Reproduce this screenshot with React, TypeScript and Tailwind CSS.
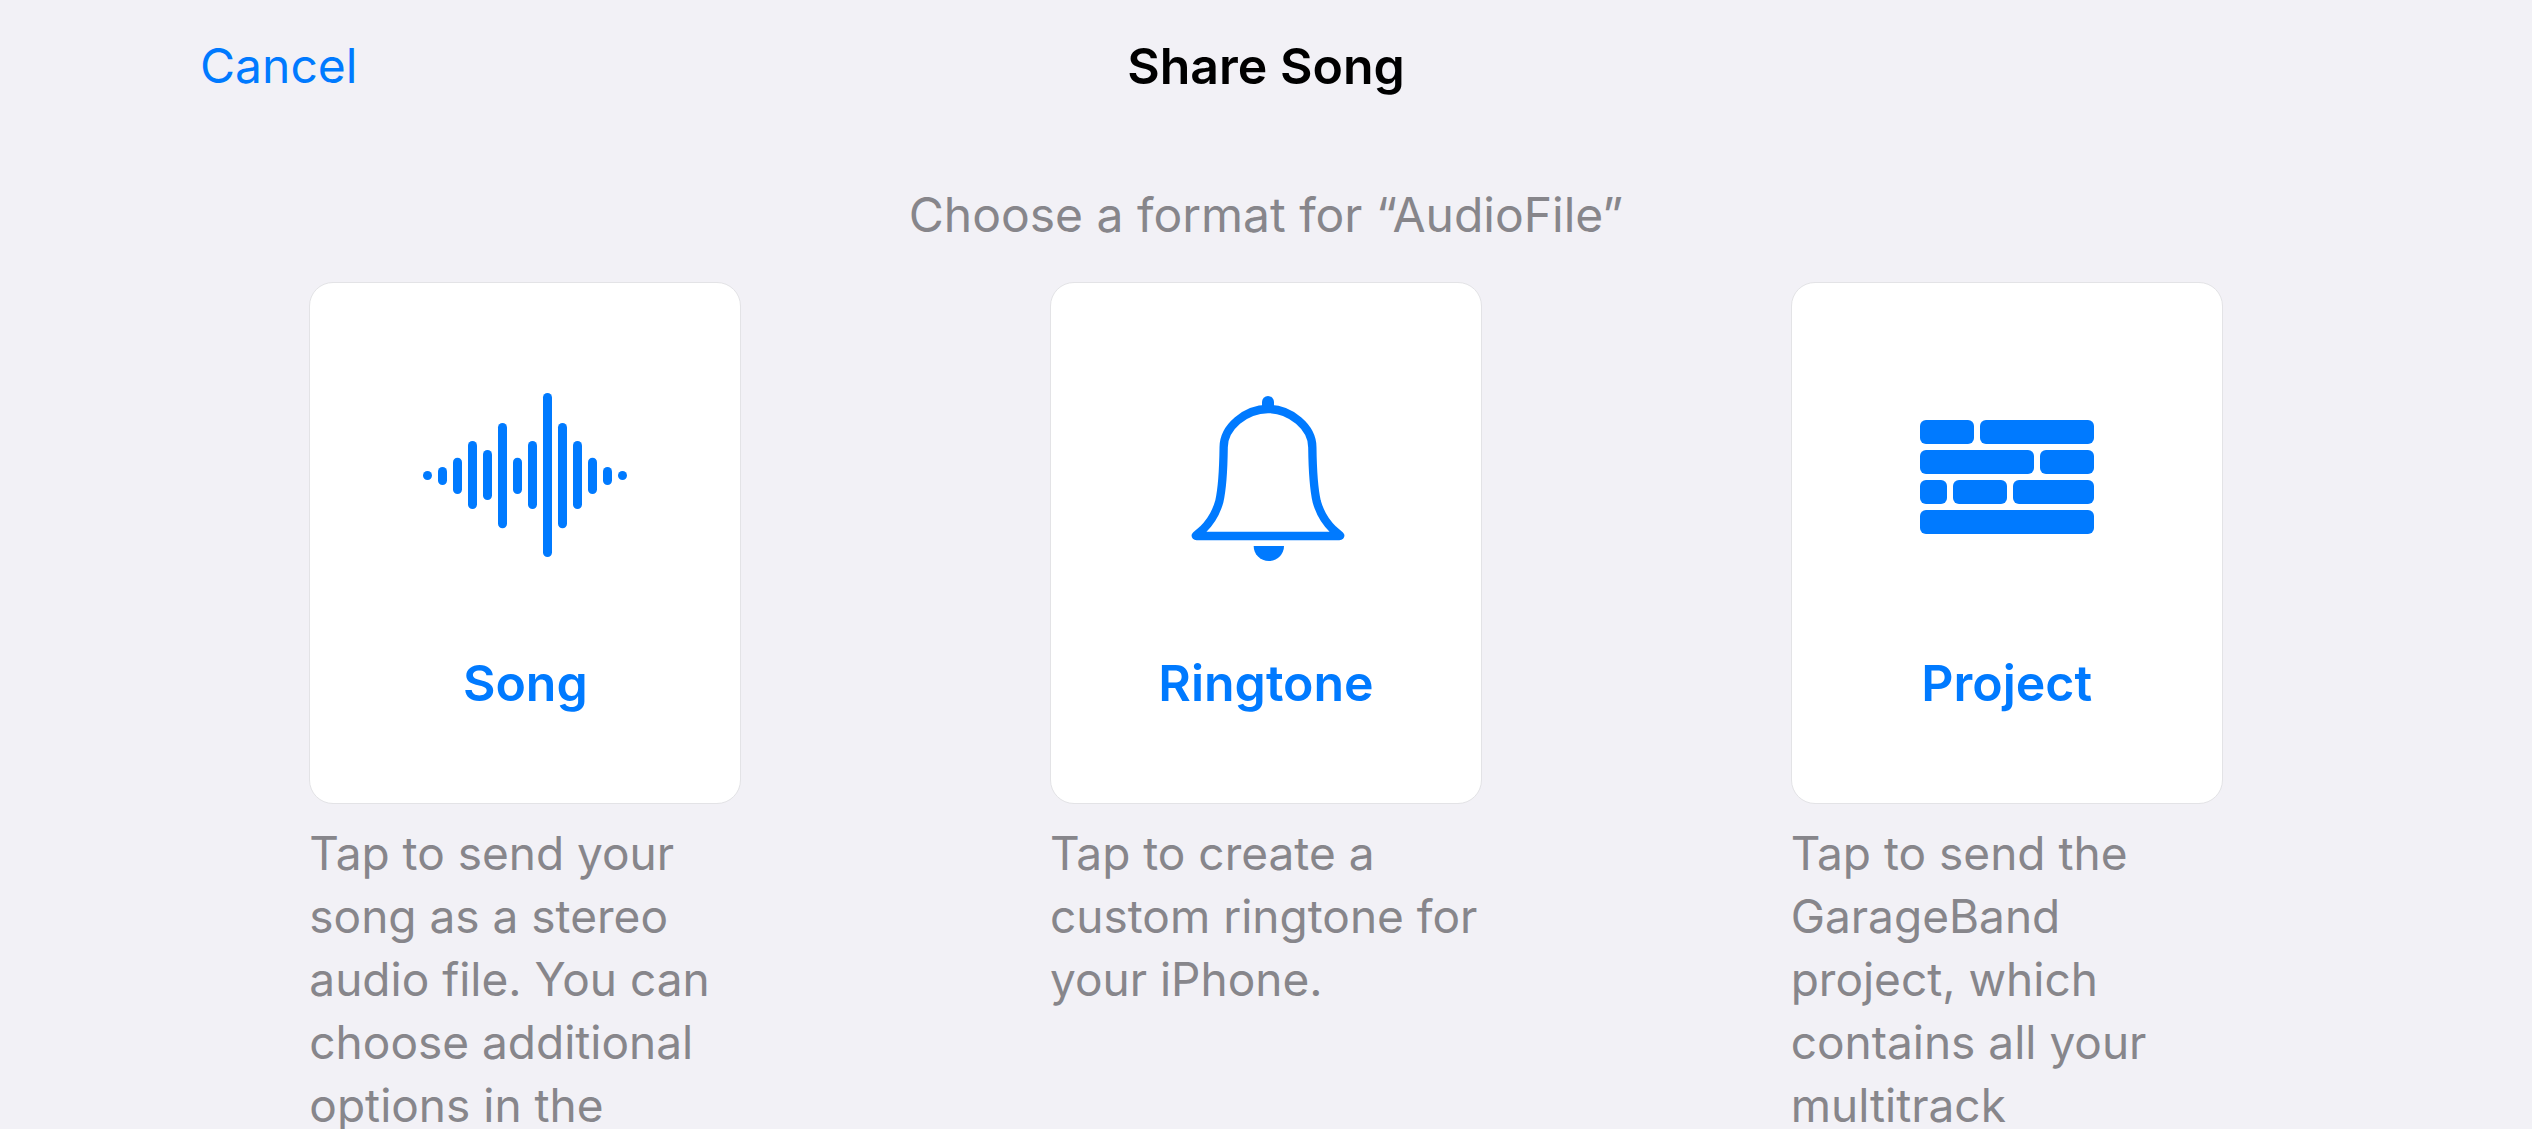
import type { ReactNode } from 'react';

/* Bars of the waveform: [centre x, top, bottom] */
const bars: [number, number, number][] = [
  [82.5, 303, 330],
  [127.5, 291, 345],
  [172.5, 263, 372],
  [217.5, 213, 417],
  [262.5, 240, 390],
  [307.5, 159, 475],
  [352.5, 263, 372],
  [397.5, 213, 417],
  [442.5, 69, 561],
  [487.5, 159, 475],
  [532.5, 213, 417],
  [577.5, 263, 372],
  [622.5, 291, 345],
  [667.5, 303, 330],
];

/* Bricks of the wall: [x, y, width] */
const bricks: [number, number, number][] = [
  [60, 60, 162],
  [240, 60, 342],
  [60, 150, 342],
  [420, 150, 162],
  [60, 240, 81],
  [159, 240, 162],
  [339, 240, 243],
  [60, 330, 522],
];

function WaveformIcon() {
  return (
    <svg aria-hidden="true" viewBox="60 0 630 630" fill="currentColor" className="size-[210px]">
      {bars.map(([x, top, bottom]) => (
        <rect key={x} x={x - 13.5} y={top} width={27} height={bottom - top} rx={13.5} />
      ))}
    </svg>
  );
}

function BellIcon() {
  return (
    <svg aria-hidden="true" viewBox="3 0 630 630" fill="currentColor" className="size-[210px]">
      <path d="M306 112V96a18 18 0 0 1 36 0v16z" />
      <path
        d="M324 117C256 117 191 172 191 232C190 310 188 350 178 394C168 430 146 462 128 479L108 496Q106 498 110 498H538Q542 498 540 496L520 479C502 462 480 430 470 394C460 350 458 310 457 232C457 172 392 117 324 117Z"
        fill="none"
        stroke="currentColor"
        strokeWidth={25}
        strokeLinejoin="round"
      />
      <path d="M281 528H372C372 553 352 573 326.500 573S281 553 281 528Z" />
    </svg>
  );
}

function BricksIcon() {
  return (
    <svg aria-hidden="true" viewBox="6 -90 630 630" fill="currentColor" className="size-[210px]">
      {bricks.map(([x, y, width]) => (
        <rect key={`${x}-${y}`} x={x} y={y} width={width} height={72} rx={18} />
      ))}
    </svg>
  );
}

interface Format {
  id: string;
  label: string;
  description: string;
  icon: ReactNode;
}

const formats: Format[] = [
  {
    id: 'song',
    label: 'Song',
    description: 'Tap to send your song as a stereo audio file. You can choose additional options in the',
    icon: <WaveformIcon />,
  },
  {
    id: 'ringtone',
    label: 'Ringtone',
    description: 'Tap to create a custom ringtone for your iPhone.',
    icon: <BellIcon />,
  },
  {
    id: 'project',
    label: 'Project',
    description: 'Tap to send the GarageBand project, which contains all your multitrack',
    icon: <BricksIcon />,
  },
];

function FormatOption({ id, label, description, icon }: Format) {
  return (
    <li className="w-[432px]">
      <button
        type="button"
        aria-describedby={`${id}-description`}
        className="flex w-full flex-col items-center rounded-3xl border border-[#e3e3e6] bg-white pt-[87px] pb-[90px] text-[#007aff]"
      >
        {icon}
        <span className="mt-[73px] text-[50px] leading-[60px] font-semibold">{label}</span>
      </button>
      <p id={`${id}-description`} className="mt-[18px] text-[46px] leading-[63px] text-[#87868b]">
        {description}
      </p>
    </li>
  );
}

export default function App() {
  return (
    <main className="h-screen overflow-hidden bg-[#f2f1f6] font-['Inter',sans-serif]">
      <header className="grid grid-cols-[1fr_auto_1fr] items-center px-[200px] pt-9">
        <button type="button" className="justify-self-start text-[48px] leading-[60px] text-[#007aff]">
          Cancel
        </button>
        <h1 className="text-[50px] leading-[60px] font-semibold text-black">Share Song</h1>
      </header>
      <p className="mt-[89px] text-center text-[48px] leading-[60px] text-[#87868b]">
        Choose a format for “AudioFile”
      </p>
      <ul className="mt-[37px] grid grid-cols-3 justify-items-center px-[155px]">
        {formats.map((format) => (
          <FormatOption key={format.id} {...format} />
        ))}
      </ul>
    </main>
  );
}
